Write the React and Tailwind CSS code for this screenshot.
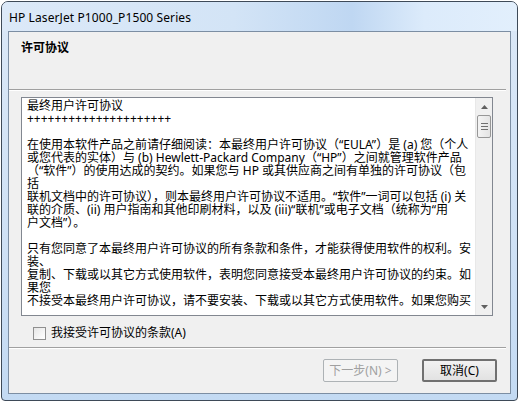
const lines = [
  "最终用户许可协议",
  "+++++++++++++++++++++",
  "",
  "在使用本软件产品之前请仔细阅读：本最终用户许可协议（“EULA”）是 (a) 您（个人",
  "或您代表的实体）与 (b) Hewlett-Packard Company（“HP”）之间就管理软件产品",
  "（“软件”）的使用达成的契约。如果您与 HP 或其供应商之间有单独的许可协议（包",
  "括",
  "联机文档中的许可协议），则本最终用户许可协议不适用。“软件”一词可以包括 (i) 关",
  "联的介质、(ii) 用户指南和其他印刷材料，以及 (iii)“联机”或电子文档（统称为“用",
  "户文档”）。",
  "",
  "只有您同意了本最终用户许可协议的所有条款和条件，才能获得使用软件的权利。安",
  "装、",
  "复制、下载或以其它方式使用软件，表明您同意接受本最终用户许可协议的约束。如",
  "果您",
  "不接受本最终用户许可协议，请不要安装、下载或以其它方式使用软件。如果您购买",
];

const font = "font-['Noto_Sans','Noto_Sans_CJK_SC',sans-serif]";

const Separator = () => (
  <div className="mr-[4px]">
    <div className="h-px bg-[#a0a0a0]" />
    <div className="h-px bg-white" />
  </div>
);

const Scrollbar = () => (
  <div className="w-[17px] h-full flex flex-col bg-[#f0f0f0] border-l border-[#e8e8e8]">
    <div className="h-[17px] flex items-center justify-center">
      <svg width="7" height="4" viewBox="0 0 7 4">
        <path d="M3.5 0 L7 4 L0 4 Z" fill="#606060" />
      </svg>
    </div>
    <div className="mx-[1px] h-[23px] rounded-[2px] border border-[#979797] bg-[linear-gradient(90deg,#f4f4f4,#e4e4e4)] flex flex-col items-center justify-center gap-[2px]">
      <div className="w-[7px] h-px bg-[#6f6f6f]" />
      <div className="w-[7px] h-px bg-[#6f6f6f]" />
      <div className="w-[7px] h-px bg-[#6f6f6f]" />
    </div>
    <div className="flex-1" />
    <div className="h-[17px] flex items-center justify-center">
      <svg width="7" height="4" viewBox="0 0 7 4">
        <path d="M0 0 L7 0 L3.5 4 Z" fill="#606060" />
      </svg>
    </div>
  </div>
);

export default function App() {
  return (
    <div className={`w-[519px] h-[402px] bg-white p-[1px] ${font}`}>
      <div className="w-[517px] h-[400px] flex flex-col rounded-t-[7px] rounded-b-[4px] border border-[#3e4a58] bg-[linear-gradient(180deg,#dbe8f7_0%,#cfe1f5_60%,#c3daf3_100%)] overflow-hidden">
        <div className="h-[29px] shrink-0 flex items-center pl-[7px] pt-[3px] bg-[linear-gradient(90deg,#dce9f8_0%,#d3e4f6_45%,#bfd7f2_68%,#dcebfb_82%,#e2effc_100%)]">
          <span className="text-[12px] text-black tracking-[0.1px]">HP LaserJet P1000_P1500 Series</span>
        </div>
        <div className="mx-[6px] h-[363px] flex flex-col bg-[#f0f0f0] border border-[#7c8ea3]">
          <div className="h-[57px] shrink-0 pl-[12px] pt-[2px]">
            <span className="text-[12px] font-bold text-black">许可协议</span>
          </div>
          <Separator />
          <div className="ml-[12px] mt-[6px] w-[472px] h-[219px] shrink-0 flex bg-white border border-[#828790]">
            <div className="flex-1 pl-[5px] pt-[1px] overflow-hidden text-[12px] leading-[13px] text-black whitespace-pre">
              {lines.map((l, i) => (
                <div key={i} className="h-[13px]">{l}</div>
              ))}
            </div>
            <Scrollbar />
          </div>
          <div className="mt-[10px] ml-[24px] flex items-center gap-[5px] h-[14px]">
            <div className="w-[13px] h-[13px] border border-[#8f8f8f] bg-[linear-gradient(135deg,#e6e6e6,#ffffff)]" />
            <span className="text-[12px] text-black leading-[14px]">我接受许可协议的条款(A)</span>
          </div>
          <div className="mt-[7px]">
            <Separator />
          </div>
          <div className="mt-[10px] flex justify-end gap-[24px] pr-[13px]">
            <div className="w-[75px] h-[23px] flex items-center justify-center border border-[#adb2b5] bg-[#f4f4f4] rounded-[2px] text-[12px] text-[#a0a0a0]">
              下一步(N) &gt;
            </div>
            <div className="w-[75px] h-[23px] flex items-center justify-center border-2 border-[#707070] bg-[linear-gradient(180deg,#f2f2f2,#e2e2e2)] rounded-[2px] text-[12px] text-black">
              取消(C)
            </div>
          </div>
        </div>
      </div>
    </div>
  );
}
